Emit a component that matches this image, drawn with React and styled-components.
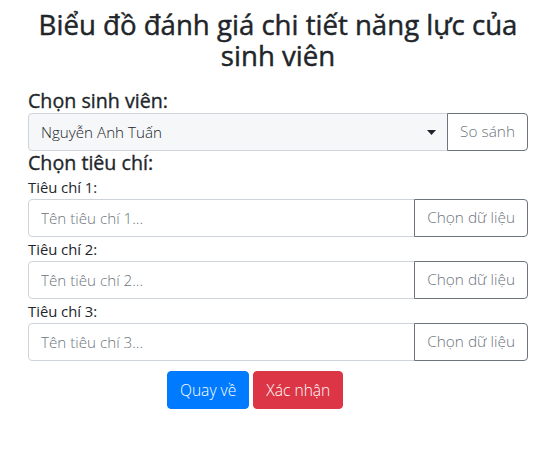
import React from "react";
import styled, { createGlobalStyle } from "styled-components";

const GlobalStyle = createGlobalStyle`
  * { box-sizing: border-box; }
  body {
    margin: 8px;
    background: #ffffff;
    color: #212529;
    font-family: "Open Sans", "Noto Sans", sans-serif;
    font-size: 14.8px;
    line-height: 24px;
  }
`;

const Wrapper = styled.div`
  width: 500px;
  margin: 0 20px;
  display: flex;
  flex-direction: column;
`;

const Title = styled.h3`
  margin: 1px 0 18px;
  font-size: 27.6px;
  font-weight: 400;
  line-height: 31px;
  text-align: center;
  padding: 0 10px;
  -webkit-text-stroke: 0.45px #212529;
`;

const SectionLabel = styled.h5`
  margin: 0;
  font-size: 19.65px;
  font-weight: 400;
  line-height: 24px;
  -webkit-text-stroke: 0.35px #212529;
`;

const FieldLabel = styled.label`
  display: block;
  font-size: 14.8px;
  line-height: 24px;
  color: #212529;
`;

const InputGroup = styled.div`
  display: flex;
  height: 38px;
`;

const SelectBox = styled.div`
  flex: 1;
  display: flex;
  align-items: center;
  justify-content: space-between;
  padding: 0 11px 0 12px;
  background: #f6f7f9;
  border: 1px solid #ced4da;
  border-radius: 4px 0 0 4px;
  color: #212529;
  font-size: 15.2px;
  font-weight: 300;
`;

const Caret = styled.svg`
  width: 9px;
  height: 5px;
  display: block;
`;

const TextInput = styled.input`
  flex: 1;
  min-width: 0;
  height: 38px;
  padding: 0 12px;
  border: 1px solid #ced4da;
  border-radius: 4px 0 0 4px;
  font-family: inherit;
  font-size: 15.2px;
  font-weight: 300;
  color: #495057;
  background: #ffffff;
  outline: none;
  &::placeholder {
    color: #6c757d;
    opacity: 1;
  }
`;

const OutlineButton = styled.button`
  margin-left: -1px;
  height: 38px;
  padding: 0 12px;
  border: 1px solid #6c757d;
  border-radius: 0 4px 4px 0;
  background: #ffffff;
  color: #6c757d;
  font-family: inherit;
  font-size: 15.4px;
  font-weight: 300;
  line-height: 24px;
  white-space: nowrap;
  cursor: pointer;
`;

const ButtonRow = styled.div`
  display: flex;
  gap: 4px;
  margin-top: 10px;
  padding-left: 139px;
`;

const SolidButton = styled.button`
  height: 38px;
  padding: 0 12px;
  border: 1px solid ${(p) => p.$color};
  border-radius: 4px;
  background: ${(p) => p.$color};
  color: #ffffff;
  font-family: inherit;
  font-size: 15.6px;
  font-weight: 300;
  line-height: 24px;
  cursor: pointer;
`;

const criteria = [1, 2, 3];

export default function App() {
  return (
    <>
      <GlobalStyle />
      <Wrapper>
        <Title>Biểu đồ đánh giá chi tiết năng lực của sinh viên</Title>
        <SectionLabel>Chọn sinh viên:</SectionLabel>
        <InputGroup>
          <SelectBox>
            <span>Nguyễn Anh Tuấn</span>
            <Caret viewBox="0 0 9 5">
              <path d="M0 0 L9 0 L4.5 5 Z" fill="#212529" />
            </Caret>
          </SelectBox>
          <OutlineButton>So sánh</OutlineButton>
        </InputGroup>
        <SectionLabel>Chọn tiêu chí:</SectionLabel>
        {criteria.map((n) => (
          <div key={n}>
            <FieldLabel>Tiêu chí {n}:</FieldLabel>
            <InputGroup>
              <TextInput placeholder={`Tên tiêu chí ${n}...`} />
              <OutlineButton>Chọn dữ liệu</OutlineButton>
            </InputGroup>
          </div>
        ))}
        <ButtonRow>
          <SolidButton $color="#007bff">Quay về</SolidButton>
          <SolidButton $color="#dc3545">Xác nhận</SolidButton>
        </ButtonRow>
      </Wrapper>
    </>
  );
}
